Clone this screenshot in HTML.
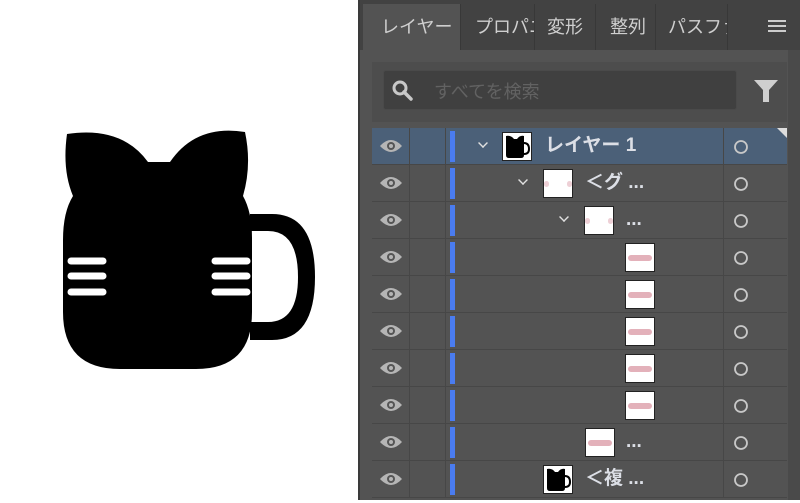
<!DOCTYPE html>
<html><head><meta charset="utf-8"><style>
*{margin:0;padding:0;box-sizing:border-box}
body{width:800px;height:500px;background:#fff;position:relative;overflow:hidden;font-family:"Liberation Sans","Noto Sans CJK JP",sans-serif}
#p{position:absolute;left:358px;top:0;width:442px;height:500px;background:#535353;border-left:2px solid #3a3a3a}
.tabbar{position:absolute;left:0;top:0;width:440px;height:50px;background:#424242}
.tab{position:absolute;top:4px;height:46px;color:#cfcfcf;font-size:18px;line-height:46px;padding-left:6px;border-right:1px solid #383838;overflow:hidden;white-space:nowrap}
.row{position:absolute;left:12px;width:415px;height:37px;border-bottom:1px solid #474747}
.c{position:absolute;top:0;height:37px;border-right:1px solid #474747}
.bar{position:absolute;left:78px;top:3px;width:5px;height:31px;background:#4a7cf0}
.txt{position:absolute;top:0;line-height:36px;color:#dcdfe6;font-size:19px;font-weight:bold;white-space:nowrap}
.th{position:absolute;top:4px;width:30px;height:29px;background:#fff;border:1px solid #222}
.pl{position:absolute;left:2px;right:2px;top:11px;height:6px;background:#e3b1ba;border-radius:3px}
.chev{position:absolute;top:10px;width:10px;height:10px;border-right:2px solid #e0e0e0;border-bottom:2px solid #e0e0e0;transform:rotate(45deg) scale(.7)}
</style></head><body>
<svg width="358" height="500" style="position:absolute;left:0;top:0">
<path d="M67 134 Q62 170 73 196 Q63 212 63 240 L63 312 Q63 369 120 369 L196 369 Q252 369 252 312 L252 238 Q252 212 243 196 Q252 165 245 132 Q196 124 170 162 L148 162 Q122 126 67 134 Z" fill="#000"/>
<path d="M250 214 L272 214 Q315 214 315 277 Q315 340 272 340 L250 340 L250 322 L268 322 Q298 322 298 277 Q298 231 268 231 L250 231 Z" fill="#000"/>
<g stroke="#fff" stroke-width="7" stroke-linecap="round">
<line x1="71" y1="261" x2="103" y2="261"/><line x1="71" y1="276" x2="103" y2="276"/><line x1="71" y1="292" x2="103" y2="292"/>
<line x1="215" y1="261" x2="247" y2="261"/><line x1="215" y1="276" x2="247" y2="276"/><line x1="215" y1="292" x2="247" y2="292"/>
</g></svg>
<div id="p">
<div class="tabbar"></div>
<div class="tab" style="left:3px;width:98px;background:#535353;top:4px;padding-left:18px">レイヤー</div>
<div class="tab" style="left:101px;width:74px;padding-left:14px">プロパニ</div>
<div class="tab" style="left:175px;width:61px;padding-left:12px">変形</div>
<div class="tab" style="left:236px;width:60px;padding-left:14px">整列</div>
<div class="tab" style="left:296px;width:72px;padding-left:12px">パスファ</div>
<div style="position:absolute;left:408px;top:20px;width:18px;height:2px;background:#ccc;box-shadow:0 5px 0 #ccc,0 10px 0 #ccc"></div>
<div style="position:absolute;left:12px;top:62px;width:415px;height:60px;background:#4d4d4d"></div>
<div style="position:absolute;left:23px;top:70px;width:354px;height:40px;background:#404040;border:1px solid #4a4a4a;border-radius:3px"></div>
<svg style="position:absolute;left:32px;top:80px" width="24" height="22"><circle cx="8" cy="8" r="6" stroke="#c8c8c8" stroke-width="3" fill="none"/><line x1="12" y1="12" x2="19" y2="19" stroke="#c8c8c8" stroke-width="3.5" stroke-linecap="round"/></svg>
<div style="position:absolute;left:74px;top:78px;font-size:18px;color:#626262">すべてを検索</div>
<svg style="position:absolute;left:393px;top:78px" width="26" height="26"><path d="M1 2 H25 L16 12 V24 H10 V12 Z" fill="#cfcfcf"/></svg>
<div style="position:absolute;left:428px;top:50px;width:12px;height:450px;background:#4a4a4a"></div>
<div id="rows"></div>
</div>
<script>
var d=[
[0,"chev:118,th:142:cat,txt:185:レイヤー 1",1],
[0,"chev:158,th:183:wh,txt:225:＜グ ..."],
[0,"chev:199,th:224:wh,txt:266:..."],
[0,"th:265:pl"],[0,"th:265:pl"],[0,"th:265:pl"],[0,"th:265:pl"],[0,"th:265:pl"],
[0,"th:225:pl,txt:266:..."],
[0,"th:183:cup,txt:225:＜複 ..."]];
var h="";
d.forEach(function(r,i){
var top=128+i*37;
h+='<div class="row" style="top:'+top+'px;'+(r[2]?'background:#4b6078;':'')+'">';
h+='<div class="c" style="left:0;width:38px"><svg width="38" height="37"><path d="M8 18 Q19 6 30 18 Q19 30 8 18Z" fill="#b5b5b5"/><circle cx="19" cy="18" r="4" fill="#555"/><circle cx="19" cy="18" r="2" fill="#b5b5b5"/></svg></div>';
h+='<div class="c" style="left:38px;width:36px"></div><div class="bar"></div>';
h+='<div class="c" style="left:86px;width:266px"></div>';
h+='<svg style="position:absolute;left:361px;top:11px" width="16" height="16"><circle cx="8" cy="8" r="6" stroke="#c8c8c8" stroke-width="1.8" fill="none"/></svg>';
if(r[2])h+='<div style="position:absolute;right:0;top:0;width:0;height:0;border-left:10px solid transparent;border-top:10px solid #ddd"></div>';
r[1].split(",").forEach(function(p){var a=p.split(":");var x=+a[1]-12;
if(a[0]=="chev")h+='<div class="chev" style="left:'+x+'px"></div>';
if(a[0]=="txt")h+='<div class="txt" style="left:'+x+'px">'+a[2]+'</div>';
if(a[0]=="th"){h+='<div class="th" style="left:'+x+'px">';
if(a[2]=="pl")h+='<div class="pl"></div>';
if(a[2]=="wh")h+='<div class="pl" style="right:auto;left:0;width:5px;opacity:.6"></div><div class="pl" style="left:auto;right:0;width:5px;opacity:.6"></div>';
if(a[2]=="cat"||a[2]=="cup")h+='<svg width="28" height="27"><path d="M3 3 Q8 2 11 6 L14 6 Q17 2 21 3 L21 22 Q21 25 18 25 L6 25 Q3 25 3 22Z" fill="#000"/><path d="M21 10 Q26 10 26 16 Q26 21 21 21" stroke="#000" stroke-width="2" fill="none"/></svg>';
h+='</div>';}
});
h+='</div>';
});
document.getElementById("rows").innerHTML=h;
</script>
</body></html>
